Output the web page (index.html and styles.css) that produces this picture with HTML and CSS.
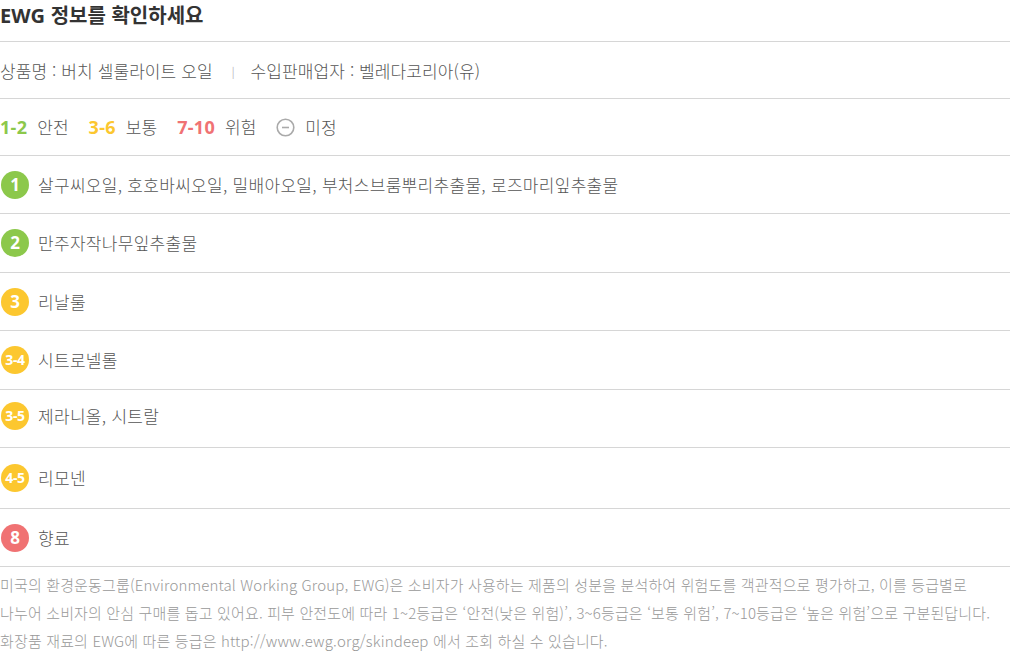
FILE: index.html
```html
<!DOCTYPE html>
<html lang="ko">
<head>
<meta charset="utf-8">
<link rel="stylesheet" href="styles.css">
</head>
<body>
<div class="ewg">
  <h2 class="title"><span class="num">EWG</span> 정보를 확인하세요</h2>
  <div class="row product">
    <span>상품명 : 버치 셀룰라이트 오일</span>
    <span class="sep">|</span>
    <span>수입판매업자 : 벨레다코리아(유)</span>
  </div>
  <div class="row legend">
    <span class="lg"><b class="num green">1-2</b> 안전</span>
    <span class="lg"><b class="num yellow">3-6</b> 보통</span>
    <span class="lg"><b class="num red">7-10</b> 위험</span>
    <span class="lg"><svg class="minus" width="19" height="19" viewBox="0 0 19 19"><circle cx="9.5" cy="9.5" r="8.3" fill="none" stroke="#aaa" stroke-width="1.6"/><line x1="6" y1="9.5" x2="13" y2="9.5" stroke="#aaa" stroke-width="1.6"/></svg> 미정</span>
  </div>
  <div class="row item h58"><span class="badge green">1</span><span>살구씨오일, 호호바씨오일, 밀배아오일, 부처스브룸뿌리추출물, 로즈마리잎추출물</span></div>
  <div class="row item h59"><span class="badge green">2</span><span>만주자작나무잎추출물</span></div>
  <div class="row item h58"><span class="badge yellow">3</span><span>리날룰</span></div>
  <div class="row item h59"><span class="badge yellow small">3-4</span><span>시트로넬롤</span></div>
  <div class="row item h58 up"><span class="badge yellow small">3-5</span><span>제라니올, 시트랄</span></div>
  <div class="row item h61"><span class="badge yellow small">4-5</span><span>리모넨</span></div>
  <div class="row item h58"><span class="badge red">8</span><span>향료</span></div>
  <p class="note">미국의 환경운동그룹(Environmental Working Group, EWG)은 소비자가 사용하는 제품의 성분을 분석하여 위험도를 객관적으로 평가하고, 이를 등급별로<br>나누어 소비자의 안심 구매를 돕고 있어요. 피부 안전도에 따라 1~2등급은 ‘안전(낮은 위험)’, 3~6등급은 ‘보통 위험’, 7~10등급은 ‘높은 위험’으로 구분된답니다.<br>화장품 재료의 EWG에 따른 등급은 http://www.ewg.org/skindeep 에서 조회 하실 수 있습니다.</p>
</div>
</body>
</html>
```

FILE: styles.css
```css
* { box-sizing: border-box; }
html, body { margin: 0; padding: 0; background: #fff; }
body {
  font-family: "Noto Sans CJK KR", "Noto Sans", sans-serif;
  color: #555;
  width: 1010px;
}
.ewg { width: 1010px; }
.num { font-family: "Open Sans", "Noto Sans", sans-serif; }
.title {
  margin: 0;
  height: 42px;
  padding-top: 1px;
  font-size: 20px;
  font-weight: 700;
  color: #333;
  line-height: 28px;
  border-bottom: 1px solid #d6d6d6;
}
.title .num { font-weight: 700; }
.row {
  display: flex;
  align-items: center;
  border-bottom: 1px solid #d6d6d6;
  font-size: 17px;
  font-weight: 300;
  line-height: 22px;
}
.product { height: 57px; padding-top: 1px; letter-spacing: 0.1px; }
.product .sep { font-size: 11px; color: #999; margin: 0 16px 0 19px; }
.legend { height: 57px; gap: 20px; }
.lg { display: flex; align-items: center; gap: 10px; }
.lg b { font-weight: 700; font-size: 18px; letter-spacing: 0.3px; }
.green { color: #8cc84b; }
.yellow { color: #fcc72f; }
.red { color: #f07273; }
.minus { display: block; }
.item { gap: 9px; letter-spacing: 0.3px; }
.h58 { height: 58px; }
.h59 { height: 59px; }
.h61 { height: 61px; }
.up { padding-bottom: 5px; }
.badge {
  flex: none;
  width: 28px; height: 28px;
  border-radius: 50%;
  margin-left: 1px;
  display: flex; align-items: center; justify-content: center;
  color: #fff;
  font-family: "Open Sans", sans-serif;
  font-weight: 700;
  font-size: 17px;
  letter-spacing: 0;
}
.badge.small { font-size: 14px; letter-spacing: -0.4px; }
.badge.green { background: #8cc84b; }
.badge.yellow { background: #fcc72f; }
.badge.red { background: #f07273; }
.note {
  margin: 4px 0 0;
  font-size: 15px;
  font-weight: 300;
  line-height: 28px;
  color: #999;
  letter-spacing: 0.15px;
  white-space: nowrap;
}
```
